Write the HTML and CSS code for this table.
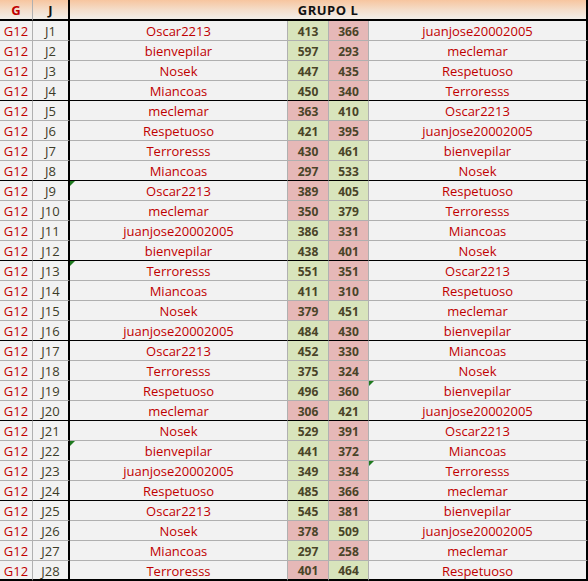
FILE: index.html
```html
<!DOCTYPE html>
<html>
<head>
<meta charset="utf-8">
<link rel="stylesheet" href="styles.css">
</head>
<body>
<div class="sheet">
  <div class="row head">
    <div class="c g hg">G</div>
    <div class="c j hj">J</div>
    <div class="c grp">GRUPO L</div>
  </div>
  <div class="row"><div class="c g">G12</div><div class="c j">J1</div><div class="c n1">Oscar2213</div><div class="c s1 win">413</div><div class="c s2 lose">366</div><div class="c n2">juanjose20002005</div></div>
  <div class="row"><div class="c g">G12</div><div class="c j">J2</div><div class="c n1">bienvepilar</div><div class="c s1 win">597</div><div class="c s2 lose">293</div><div class="c n2">meclemar</div></div>
  <div class="row"><div class="c g">G12</div><div class="c j">J3</div><div class="c n1">Nosek</div><div class="c s1 win">447</div><div class="c s2 lose">435</div><div class="c n2">Respetuoso</div></div>
  <div class="row sep"><div class="c g">G12</div><div class="c j">J4</div><div class="c n1">Miancoas</div><div class="c s1 win">450</div><div class="c s2 lose">340</div><div class="c n2">Terroresss</div></div>
  <div class="row"><div class="c g">G12</div><div class="c j">J5</div><div class="c n1">meclemar</div><div class="c s1 lose">363</div><div class="c s2 win">410</div><div class="c n2">Oscar2213</div></div>
  <div class="row"><div class="c g">G12</div><div class="c j">J6</div><div class="c n1">Respetuoso</div><div class="c s1 win">421</div><div class="c s2 lose">395</div><div class="c n2">juanjose20002005</div></div>
  <div class="row"><div class="c g">G12</div><div class="c j">J7</div><div class="c n1">Terroresss</div><div class="c s1 lose">430</div><div class="c s2 win">461</div><div class="c n2">bienvepilar</div></div>
  <div class="row sep"><div class="c g">G12</div><div class="c j">J8</div><div class="c n1">Miancoas</div><div class="c s1 lose">297</div><div class="c s2 win">533</div><div class="c n2">Nosek</div></div>
  <div class="row"><div class="c g">G12</div><div class="c j">J9</div><div class="c n1 tri">Oscar2213</div><div class="c s1 lose">389</div><div class="c s2 win">405</div><div class="c n2">Respetuoso</div></div>
  <div class="row"><div class="c g">G12</div><div class="c j">J10</div><div class="c n1">meclemar</div><div class="c s1 lose">350</div><div class="c s2 win">379</div><div class="c n2">Terroresss</div></div>
  <div class="row"><div class="c g">G12</div><div class="c j">J11</div><div class="c n1">juanjose20002005</div><div class="c s1 win">386</div><div class="c s2 lose">331</div><div class="c n2">Miancoas</div></div>
  <div class="row sep"><div class="c g">G12</div><div class="c j">J12</div><div class="c n1">bienvepilar</div><div class="c s1 win">438</div><div class="c s2 lose">401</div><div class="c n2">Nosek</div></div>
  <div class="row"><div class="c g">G12</div><div class="c j">J13</div><div class="c n1 tri">Terroresss</div><div class="c s1 win">551</div><div class="c s2 lose">351</div><div class="c n2">Oscar2213</div></div>
  <div class="row"><div class="c g">G12</div><div class="c j">J14</div><div class="c n1">Miancoas</div><div class="c s1 win">411</div><div class="c s2 lose">310</div><div class="c n2">Respetuoso</div></div>
  <div class="row"><div class="c g">G12</div><div class="c j">J15</div><div class="c n1">Nosek</div><div class="c s1 lose">379</div><div class="c s2 win">451</div><div class="c n2">meclemar</div></div>
  <div class="row sep"><div class="c g">G12</div><div class="c j">J16</div><div class="c n1">juanjose20002005</div><div class="c s1 win">484</div><div class="c s2 lose">430</div><div class="c n2">bienvepilar</div></div>
  <div class="row"><div class="c g">G12</div><div class="c j">J17</div><div class="c n1">Oscar2213</div><div class="c s1 win">452</div><div class="c s2 lose">330</div><div class="c n2">Miancoas</div></div>
  <div class="row"><div class="c g">G12</div><div class="c j">J18</div><div class="c n1">Terroresss</div><div class="c s1 win">375</div><div class="c s2 lose">324</div><div class="c n2">Nosek</div></div>
  <div class="row"><div class="c g">G12</div><div class="c j">J19</div><div class="c n1">Respetuoso</div><div class="c s1 win">496</div><div class="c s2 lose">360</div><div class="c n2 tri">bienvepilar</div></div>
  <div class="row sep"><div class="c g">G12</div><div class="c j">J20</div><div class="c n1">meclemar</div><div class="c s1 lose">306</div><div class="c s2 win">421</div><div class="c n2">juanjose20002005</div></div>
  <div class="row"><div class="c g">G12</div><div class="c j">J21</div><div class="c n1">Nosek</div><div class="c s1 win">529</div><div class="c s2 lose">391</div><div class="c n2">Oscar2213</div></div>
  <div class="row"><div class="c g">G12</div><div class="c j">J22</div><div class="c n1 tri">bienvepilar</div><div class="c s1 win">441</div><div class="c s2 lose">372</div><div class="c n2">Miancoas</div></div>
  <div class="row"><div class="c g">G12</div><div class="c j">J23</div><div class="c n1">juanjose20002005</div><div class="c s1 win">349</div><div class="c s2 lose">334</div><div class="c n2 tri">Terroresss</div></div>
  <div class="row sep"><div class="c g">G12</div><div class="c j">J24</div><div class="c n1">Respetuoso</div><div class="c s1 win">485</div><div class="c s2 lose">366</div><div class="c n2">meclemar</div></div>
  <div class="row"><div class="c g">G12</div><div class="c j">J25</div><div class="c n1">Oscar2213</div><div class="c s1 win">545</div><div class="c s2 lose">381</div><div class="c n2">bienvepilar</div></div>
  <div class="row"><div class="c g">G12</div><div class="c j">J26</div><div class="c n1">Nosek</div><div class="c s1 lose">378</div><div class="c s2 win">509</div><div class="c n2">juanjose20002005</div></div>
  <div class="row"><div class="c g">G12</div><div class="c j">J27</div><div class="c n1">Miancoas</div><div class="c s1 win">297</div><div class="c s2 lose">258</div><div class="c n2">meclemar</div></div>
  <div class="row last"><div class="c g">G12</div><div class="c j">J28</div><div class="c n1">Terroresss</div><div class="c s1 lose">401</div><div class="c s2 win">464</div><div class="c n2">Respetuoso</div></div>
</div>
</body>
</html>
```
FILE: styles.css
```css
html, body {
  margin: 0;
  padding: 0;
  background: #ffffff;
}

.sheet {
  display: grid;
  grid-template-columns: 33px 37px 218px 41px 40px 219px;
  width: 588px;
  font-family: "Open Sans", "Noto Sans", sans-serif;
  font-size: 13px;
}

.row {
  display: contents;
}

.c {
  box-sizing: border-box;
  height: 20px;
  display: flex;
  align-items: center;
  justify-content: center;
  background: #f2f2f2;
  border-right: 1px solid #b0b0b0;
  border-bottom: 1px solid #b0b0b0;
  color: #c00000;
  position: relative;
  white-space: nowrap;
  padding-top: 1px;
}

.c.j {
  border-right: 2px solid #000;
  color: #3c3c28;
}

.c.n2 {
  border-right: 2px solid #000;
}

.c.s1, .c.s2 {
  font-weight: 700;
  font-size: 12px;
  color: #4a4428;
}

.c.win {
  background: #d8e4bc;
}

.c.lose {
  background: #e6b8b7;
}

.sep .c {
  border-bottom-color: #000;
}

.last .c {
  border-bottom: 2px solid #000;
}

.head .c {
  height: 21px;
  border-bottom: 2px solid #000;
  background: linear-gradient(to bottom, #f7c59f 0%, #f4dfcd 55%, #f2efea 100%);
  font-weight: 700;
  font-size: 13px;
}

.head .hg {
  color: #c00000;
}

.head .hj {
  color: #111;
}

.head .grp {
  grid-column: 3 / span 4;
  border-right: 2px solid #000;
  color: #111;
  letter-spacing: 0.5px;
}

.tri::before {
  content: "";
  position: absolute;
  top: 0;
  left: 0;
  width: 0;
  height: 0;
  border-top: 5px solid #1f7a1f;
  border-right: 5px solid transparent;
}
```
